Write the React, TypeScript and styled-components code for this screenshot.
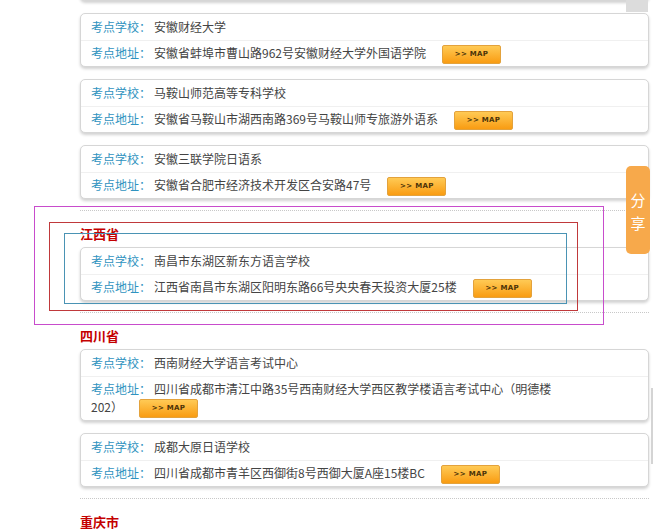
import React from 'react';
import styled, { createGlobalStyle } from 'styled-components';

const GlobalStyle = createGlobalStyle`
  html, body {
    margin: 0;
    padding: 0;
    background: #ffffff;
    overflow: hidden;
  }
  body {
    font-family: "Noto Sans CJK SC", "Microsoft YaHei", sans-serif;
    font-size: 12px;
    color: #444;
  }
`;

const Page = styled.div`
  position: relative;
  width: 653px;
  height: 529px;
  overflow: hidden;
`;

const List = styled.div`
  margin-top: -53px;
  padding-left: 80px;
  width: 569px;
`;

const Province = styled.div<{ first?: boolean }>`
  position: relative;
  border-top: ${(p) => (p.first ? 'none' : '1px dotted #c8c8c8')};
  margin-top: ${(p) => (p.first ? '0' : '11px')};
  padding-top: ${(p) => (p.first ? '0' : '13px')};
`;

const ProvinceName = styled.h3`
  margin: 0 0 3px 0;
  font-size: 13px;
  line-height: 20px;
  font-weight: bold;
  color: #c40000;
`;

const Cards = styled.div`
  display: flex;
  flex-direction: column;
  gap: 12px;
`;

const Card = styled.div`
  background: #fff;
  border: 1px solid #d6d6d6;
  border-radius: 5px;
  box-shadow: 0 2px 3px rgba(0, 0, 0, 0.18);
`;

const Row = styled.div<{ second?: boolean }>`
  padding: ${(p) => (p.second ? '3px 80px 4px 10px' : '4px 80px 4px 10px')};
  border-top: ${(p) => (p.second ? '1px solid #f0f0f0' : 'none')};
  line-height: 18px;
  color: #444;
`;

const Label = styled.span`
  color: #2f93c0;
  margin-right: 3px;
`;

const MapButton = styled.span`
  display: inline-block;
  box-sizing: border-box;
  vertical-align: middle;
  margin: -3px 0 -3px 16px;
  width: 59px;
  height: 19px;
  line-height: 17px;
  text-align: center;
  border: 1px solid #e3a23c;
  border-radius: 2px;
  background: linear-gradient(#ffca55, #f99c12);
  font-family: "DejaVu Sans", sans-serif;
  font-size: 7px;
  font-weight: bold;
  color: #4a3208;
  letter-spacing: 0.3px;
`;

const DebugBox = styled.div<{ color: string }>`
  position: absolute;
  border: 1px solid ${(p) => p.color};
  pointer-events: none;
`;

const ShareTab = styled.div`
  position: absolute;
  left: 626px;
  top: 166px;
  width: 24px;
  height: 88px;
  background: #f7a94b;
  border-radius: 5px;
  color: #fff;
  font-size: 15px;
  line-height: 23px;
  display: flex;
  flex-direction: column;
  align-items: center;
  justify-content: center;
  padding-top: 2px;
  box-sizing: border-box;
`;

const CornerBlock = styled.div`
  position: absolute;
  left: 626px;
  top: 0;
  width: 22px;
  height: 12px;
  background: #dcdcdc;
`;

const ScrollStrip = styled.div`
  position: absolute;
  left: 651px;
  top: 388px;
  width: 2px;
  height: 76px;
  background: #d4d4d4;
`;

type Site = { school: string; address: string };
type Group = { name?: string; sites: Site[] };

const groups: Group[] = [
  {
    sites: [
      { school: '安徽大学', address: '安徽省合肥市肥西路3号' },
      { school: '安徽财经大学', address: '安徽省蚌埠市曹山路962号安徽财经大学外国语学院' },
      { school: '马鞍山师范高等专科学校', address: '安徽省马鞍山市湖西南路369号马鞍山师专旅游外语系' },
      { school: '安徽三联学院日语系', address: '安徽省合肥市经济技术开发区合安路47号' },
    ],
  },
  {
    name: '江西省',
    sites: [{ school: '南昌市东湖区新东方语言学校', address: '江西省南昌市东湖区阳明东路66号央央春天投资大厦25楼' }],
  },
  {
    name: '四川省',
    sites: [
      { school: '西南财经大学语言考试中心', address: '四川省成都市清江中路35号西南财经大学西区教学楼语言考试中心（明德楼202）' },
      { school: '成都大原日语学校', address: '四川省成都市青羊区西御街8号西御大厦A座15楼BC' },
    ],
  },
  { name: '重庆市', sites: [] },
];

const SiteCard = ({ site }: { site: Site }) => (
  <Card>
    <Row>
      <Label>考点学校：</Label>
      {site.school}
    </Row>
    <Row second>
      <Label>考点地址：</Label>
      {site.address}
      <MapButton>&gt;&gt; MAP</MapButton>
    </Row>
  </Card>
);

export default function App() {
  return (
    <Page>
      <GlobalStyle />
      <List>
        {groups.map((g, i) => (
          <Province key={i} first={i === 0}>
            {g.name === '江西省' && (
              <>
                <DebugBox color="#c84ccc" style={{ left: -46, top: -5, width: 568, height: 117 }} />
                <DebugBox color="#c0393b" style={{ left: -31, top: 11, width: 527, height: 87 }} />
                <DebugBox color="#4a93b4" style={{ left: -16, top: 22, width: 501, height: 69 }} />
              </>
            )}
            {g.name && <ProvinceName>{g.name}</ProvinceName>}
            {g.sites.length > 0 && (
              <Cards>
                {g.sites.map((s, j) => (
                  <SiteCard key={j} site={s} />
                ))}
              </Cards>
            )}
          </Province>
        ))}
      </List>
      <CornerBlock />
      <ScrollStrip />
      <ShareTab>
        <span>分</span>
        <span>享</span>
      </ShareTab>
    </Page>
  );
}
